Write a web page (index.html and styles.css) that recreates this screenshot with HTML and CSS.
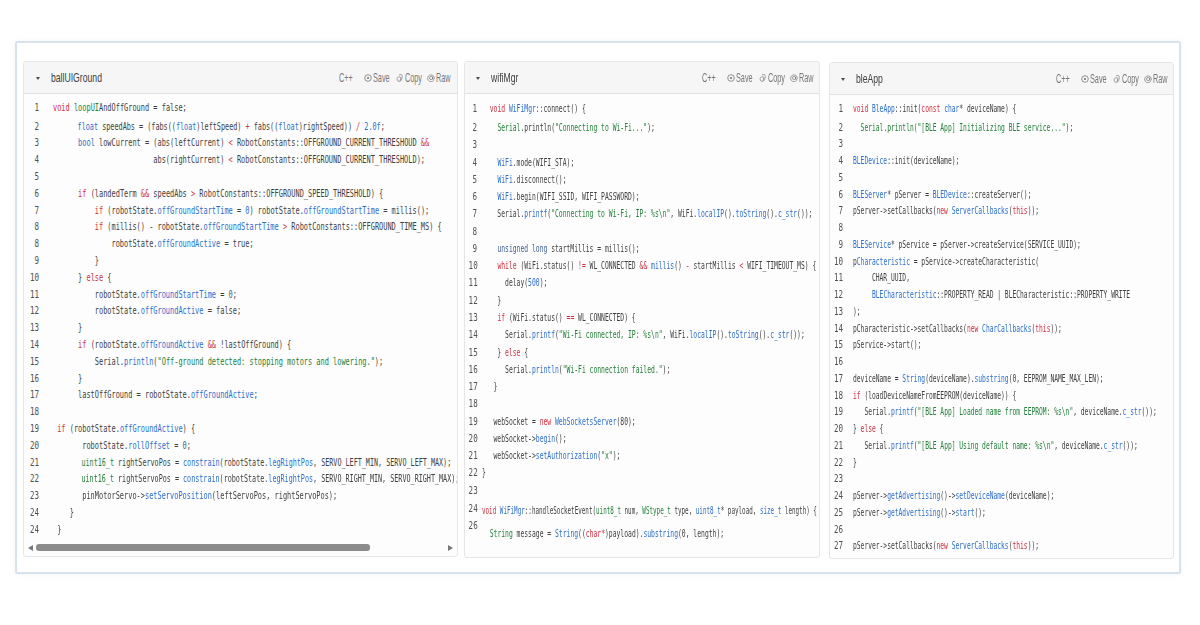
FILE: index.html
```html
<!DOCTYPE html>
<html lang="en">
<head>
<meta charset="utf-8">
<title>Code panels</title>
<link rel="stylesheet" href="styles.css">
</head>
<body>
<svg class="defs" width="0" height="0" aria-hidden="true">
  <symbol id="i-save" viewBox="0 0 8 8"><circle cx="4" cy="4" r="3.3" fill="none" stroke="currentColor" stroke-width=".8"/><circle cx="4" cy="4" r="1.1" fill="currentColor"/></symbol>
  <symbol id="i-copy" viewBox="0 0 8 8"><path d="M3 1.2c.3-.6 1.2-.8 2-.6s1.5.8 1.3 1.8L5.6 5.6c-.2.9-.8 1.3-1.5 1.2M2.3 3C1.5 3.3 1 4 1.1 5l.3 1.2c.2.8.8 1.3 1.6 1.2s1.3-.6 1.4-1.4l.3-2.3C4.800 2.800 3.200 2.600 2.300 3z" fill="none" stroke="currentColor" stroke-width=".7"/></symbol>
  <symbol id="i-raw" viewBox="0 0 8 8"><path d="M6.700 6.400A3.400 3.400 0 1 1 7.400 4c0 1-.4 1.600-1 1.600-.5 0-.8-.4-.7-1l.1-2.100M5.700 4A1.600 1.600 0 1 1 2.500 4a1.600 1.600 0 0 1 3.200 0z" fill="none" stroke="currentColor" stroke-width=".7"/></symbol>
</svg>
<main class="frame">
  <section class="panel p1">
    <header class="head">
      <span class="caret"></span>
      <span class="title"><span>ballUIGround</span></span>
      <div class="acts">
        <span class="act a-lang"><span>C++</span></span>
        <span class="act a-save"><svg class="ico"><use href="#i-save"/></svg><span>Save</span></span>
        <span class="act a-copy"><svg class="ico"><use href="#i-copy"/></svg><span>Copy</span></span>
        <span class="act a-raw"><svg class="ico"><use href="#i-raw"/></svg><span>Raw</span></span>
      </div>
    </header>
    <div class="body">
<div class="row first"><span class="num">1</span><code class="code"><span class="k">void</span> <span class="g">loopUI</span>AndOffGround = false;</code></div>
<div class="row nar"><span class="num">2</span><code class="code">      <span class="b">float</span> speedAbs = (fabs((<span class="b">float</span>)leftSpeed) <span class="k">+</span> fabs((<span class="b">float</span>)rightSpeed)) <span class="k">/</span> <span class="b">2.0f</span>;</code></div>
<div class="row"><span class="num">3</span><code class="code">      <span class="b">bool</span> lowCurrent = (abs(leftCurrent) <span class="k">&lt;</span> RobotConstants::OFFGROUND_CURRENT_THRESHOUD <span class="k">&amp;&amp;</span></code></div>
<div class="row"><span class="num">4</span><code class="code">                        abs(rightCurrent) <span class="k">&lt;</span> RobotConstants::OFFGROUND_CURRENT_THRESHOLD);</code></div>
<div class="row"><span class="num">5</span><code class="code"></code></div>
<div class="row"><span class="num">6</span><code class="code">      <span class="k">if</span> (landedTerm <span class="k">&amp;&amp;</span> speedAbs <span class="k">&gt;</span> RobotConstants::OFFGROUND_SPEED_THRESHOLD) {</code></div>
<div class="row"><span class="num">7</span><code class="code">          <span class="k">if</span> (robotState.<span class="b">offGroundStartTime</span> = <span class="b">0</span>) robotState.<span class="b">offGroundStartTime</span> = millis();</code></div>
<div class="row"><span class="num">8</span><code class="code">          <span class="k">if</span> (millis() - robotState.<span class="b">offGroundStartTime</span> <span class="k">&gt;</span> RobotConstants::OFFGROUND_TIME_MS) {</code></div>
<div class="row"><span class="num">8</span><code class="code">              robotState.<span class="b">offGroundActive</span> = true;</code></div>
<div class="row"><span class="num">9</span><code class="code">          }</code></div>
<div class="row"><span class="num">10</span><code class="code">      } <span class="k">else</span> {</code></div>
<div class="row"><span class="num">11</span><code class="code">          robotState.<span class="b">offGroundStartTime</span> = <span class="n">0</span>;</code></div>
<div class="row"><span class="num">12</span><code class="code">          robotState.<span class="b">offGroundActive</span> = false;</code></div>
<div class="row"><span class="num">13</span><code class="code">      }</code></div>
<div class="row"><span class="num">14</span><code class="code">      <span class="k">if</span> (robotState.<span class="b">offGroundActive</span> <span class="k">&amp;&amp;</span> !lastOffGround) {</code></div>
<div class="row"><span class="num">15</span><code class="code">          Serial.<span class="b">println</span>(<span class="g">"Off-ground detected: stopping motors and lowering."</span>);</code></div>
<div class="row"><span class="num">16</span><code class="code">      }</code></div>
<div class="row"><span class="num">17</span><code class="code">      lastOffGround = robotState.<span class="b">offGroundActive</span>;</code></div>
<div class="row"><span class="num">18</span><code class="code"></code></div>
<div class="row"><span class="num">19</span><code class="code"> <span class="k">if</span> (robotState.<span class="b">offGroundActive</span>) {</code></div>
<div class="row"><span class="num">20</span><code class="code">       robotState.<span class="b">rollOffset</span> = <span class="n">0</span>;</code></div>
<div class="row sq"><span class="num">21</span><code class="code">       <span class="g">uint16_t</span> rightServoPos = <span class="b">constrain</span>(robotState.<span class="b">legRightPos</span>, SERVO_LEFT_MIN, SERVO_LEFT_MAX);</code></div>
<div class="row sq"><span class="num">22</span><code class="code">       <span class="g">uint16_t</span> rightServoPos = <span class="b">constrain</span>(robotState.<span class="b">legRightPos</span>, SERVO_RIGHT_MIN, SERVO_RIGHT_MAX);</code></div>
<div class="row"><span class="num">23</span><code class="code">       pinMotorServo-&gt;<span class="b">setServoPosition</span>(leftServoPos, rightServoPos);</code></div>
<div class="row"><span class="num">24</span><code class="code">    }</code></div>
<div class="row"><span class="num">24</span><code class="code"> }</code></div>
    </div>
    <div class="scroll"><span class="arrow left"></span><span class="thumb"></span><span class="arrow right"></span></div>
  </section>

  <section class="panel p2">
    <header class="head">
      <span class="caret"></span>
      <span class="title"><span>wifiMgr</span></span>
      <div class="acts">
        <span class="act a-lang"><span>C++</span></span>
        <span class="act a-save"><svg class="ico"><use href="#i-save"/></svg><span>Save</span></span>
        <span class="act a-copy"><svg class="ico"><use href="#i-copy"/></svg><span>Copy</span></span>
        <span class="act a-raw"><svg class="ico"><use href="#i-raw"/></svg><span>Raw</span></span>
      </div>
    </header>
    <div class="body">
<div class="row first"><span class="num">1</span><code class="code">  <span class="k">void</span> <span class="b">WiFiMgr</span>::connect() {</code></div>
<div class="row"><span class="num">2</span><code class="code">    <span class="g">Serial</span>.println(<span class="g">"Connecting to Wi-Fi..."</span>);</code></div>
<div class="row"><span class="num">3</span><code class="code"></code></div>
<div class="row"><span class="num">4</span><code class="code">    <span class="b">WiFi</span>.mode(WIFI_STA);</code></div>
<div class="row"><span class="num">5</span><code class="code">    <span class="b">WiFi</span>.disconnect();</code></div>
<div class="row"><span class="num">6</span><code class="code">    <span class="b">WiFi</span>.begin(WIFI_SSID, WIFI_PASSWORD);</code></div>
<div class="row"><span class="num">7</span><code class="code">    Serial.<span class="b">printf</span>(<span class="g">"Connecting to Wi-Fi, IP: %s\n"</span>, WiFi.<span class="b">localIP</span>().<span class="b">toString</span>().<span class="b">c_str</span>());</code></div>
<div class="row"><span class="num">8</span><code class="code"></code></div>
<div class="row"><span class="num">9</span><code class="code">    <span class="n">unsigned long</span> startMillis = millis();</code></div>
<div class="row"><span class="num">10</span><code class="code">    <span class="k">while</span> (WiFi.status() <span class="k">!=</span> WL_CONNECTED <span class="k">&amp;&amp;</span> <span class="b">millis</span>() <span class="k">-</span> startMillis <span class="k">&lt;</span> WIFI_TIMEOUT_MS) {</code></div>
<div class="row"><span class="num">11</span><code class="code">      delay(<span class="b">500</span>);</code></div>
<div class="row"><span class="num">12</span><code class="code">    }</code></div>
<div class="row"><span class="num">13</span><code class="code">    <span class="k">if</span> (WiFi.status() <span class="k">==</span> WL_CONNECTED) {</code></div>
<div class="row"><span class="num">14</span><code class="code">      Serial.<span class="b">printf</span>(<span class="g">"Wi-Fi connected, IP: %s\n"</span>, WiFi.<span class="b">localIP</span>().<span class="b">toString</span>().<span class="b">c_str</span>());</code></div>
<div class="row"><span class="num">15</span><code class="code">    } <span class="k">else</span> {</code></div>
<div class="row"><span class="num">16</span><code class="code">      Serial.<span class="b">println</span>(<span class="g">"Wi-Fi connection failed."</span>);</code></div>
<div class="row"><span class="num">17</span><code class="code">   }</code></div>
<div class="row"><span class="num">18</span><code class="code"></code></div>
<div class="row"><span class="num">19</span><code class="code">   webSocket = <span class="k">new</span> <span class="b">WebSocketsServer</span>(80);</code></div>
<div class="row"><span class="num">20</span><code class="code">   webSocket-&gt;<span class="b">begin</span>();</code></div>
<div class="row"><span class="num">21</span><code class="code">   webSocket-&gt;<span class="b">setAuthorization</span>(<span class="g">"x"</span>);</code></div>
<div class="row"><span class="num">22</span><code class="code">}</code></div>
<div class="row"><span class="num">23</span><code class="code"></code></div>
<div class="row tight"><span class="num">24</span><code class="code"><span class="k">void</span> <span class="b">WiFiMgr</span>::handleSocketEvent(<span class="g">uint8_t</span> num, <span class="g">WStype_t</span> type, <span class="b">uint8_t</span>* payload, <span class="b">size_t</span> length) {</code></div>
<div class="row drop"><span class="num">26</span><code class="code">  <span class="g">String</span> message = <span class="b">String</span>((<span class="k">char*</span>)payload).<span class="b">substring</span>(0, length);</code></div>
    </div>
  </section>

  <section class="panel p3">
    <header class="head">
      <span class="caret"></span>
      <span class="title"><span>bleApp</span></span>
      <div class="acts">
        <span class="act a-lang"><span>C++</span></span>
        <span class="act a-save"><svg class="ico"><use href="#i-save"/></svg><span>Save</span></span>
        <span class="act a-copy"><svg class="ico"><use href="#i-copy"/></svg><span>Copy</span></span>
        <span class="act a-raw"><svg class="ico"><use href="#i-raw"/></svg><span>Raw</span></span>
      </div>
    </header>
    <div class="body">
<div class="row first"><span class="num">1</span><code class="code"><span class="k">void</span> <span class="b">BleApp</span>::init(<span class="k">const</span> <span class="b">char</span>* deviceName) {</code></div>
<div class="row"><span class="num">2</span><code class="code">  <span class="g">Serial.println("[BLE App] Initializing BLE service..."</span>);</code></div>
<div class="row"><span class="num">3</span><code class="code"></code></div>
<div class="row"><span class="num">4</span><code class="code"><span class="b">BLEDevice</span>::init(deviceName);</code></div>
<div class="row"><span class="num">5</span><code class="code"></code></div>
<div class="row"><span class="num">6</span><code class="code"><span class="b">BLEServer</span>* pServer = <span class="b">BLEDevice</span>::createServer();</code></div>
<div class="row"><span class="num">7</span><code class="code">pServer-&gt;setCallbacks(<span class="k">new</span> <span class="b">ServerCallbacks</span>(<span class="k">this</span>));</code></div>
<div class="row"><span class="num">8</span><code class="code"></code></div>
<div class="row"><span class="num">9</span><code class="code"><span class="b">BLEService</span>* pService = pServer-&gt;createService(SERVICE_UUID);</code></div>
<div class="row"><span class="num">10</span><code class="code">p<span class="b">Characteristic</span> = pService-&gt;createCharacteristic(</code></div>
<div class="row"><span class="num">11</span><code class="code">     CHAR_UUID,</code></div>
<div class="row"><span class="num">12</span><code class="code">     <span class="b">BLECharacteristic</span>::PROPERTY_READ | BLECharacteristic::PROPERTY_WRITE</code></div>
<div class="row"><span class="num">13</span><code class="code">);</code></div>
<div class="row"><span class="num">14</span><code class="code">pCharacteristic-&gt;setCallbacks(<span class="k">new</span> <span class="b">CharCallbacks</span>(<span class="k">this</span>));</code></div>
<div class="row"><span class="num">15</span><code class="code">pService-&gt;start();</code></div>
<div class="row"><span class="num">16</span><code class="code"></code></div>
<div class="row"><span class="num">17</span><code class="code">deviceName = <span class="b">String</span>(deviceName).<span class="b">substring</span>(0, EEPROM_NAME_MAX_LEN);</code></div>
<div class="row"><span class="num">18</span><code class="code"><span class="k">if</span> (loadDeviceNameFromEEPROM(deviceName)) {</code></div>
<div class="row"><span class="num">19</span><code class="code">   Serial.<span class="b">printf</span>(<span class="g">"[BLE App] Loaded name from EEPROM: %s\n"</span>, deviceName.<span class="b">c_str</span>());</code></div>
<div class="row"><span class="num">20</span><code class="code">} <span class="k">else</span> {</code></div>
<div class="row"><span class="num">21</span><code class="code">   Serial.<span class="b">printf</span>(<span class="g">"[BLE App] Using default name: %s\n"</span>, deviceName.<span class="b">c_str</span>());</code></div>
<div class="row"><span class="num">22</span><code class="code">}</code></div>
<div class="row"><span class="num">23</span><code class="code"></code></div>
<div class="row"><span class="num">24</span><code class="code">pServer-&gt;<span class="b">getAdvertising</span>()-&gt;<span class="b">setDeviceName</span>(deviceName);</code></div>
<div class="row"><span class="num">25</span><code class="code">pServer-&gt;<span class="b">getAdvertising</span>()-&gt;<span class="b">start</span>();</code></div>
<div class="row"><span class="num">26</span><code class="code"></code></div>
<div class="row"><span class="num">27</span><code class="code">pServer-&gt;setCallbacks(<span class="k">new</span> <span class="b">ServerCallbacks</span>(<span class="k">this</span>));</code></div>
    </div>
  </section>
</main>
</body>
</html>
```

FILE: styles.css
```css
* { box-sizing: border-box; }

html, body { margin: 0; height: 100%; background: #fff; overflow: hidden; }

body { padding: 41px 0 0 15px; font-family: "Liberation Sans", Arial, sans-serif; }

.defs { display: block; height: 0; width: 0; }

.frame {
  width: 1166px;
  height: 533px;
  display: flex;
  align-items: flex-start;
  padding: 18px 0 0 6px;
  border: 2px solid #d8e2ec;
  border-radius: 2px;
  box-shadow: 0 0 5px rgba(205, 218, 230, .35);
  filter: blur(.5px);
}

.panel {
  display: flex;
  flex-direction: column;
  flex: none;
  height: 497px;
  background: #fdfdfd;
  border: 1px solid #e6e6e6;
  border-radius: 3px;
  overflow: hidden;
}

.p1 { width: 435px; --rh: 16.8px; --sx: .643; --numw: 15px; --gap: 14px; --headl: 11px; --headr: 9px; margin-right: 6px; height: 496px; }
.p2 { width: 356px; --rh: 17.28px; --sx: .591; --numw: 12px; --gap: 5px; --headl: 10px; --headr: 8px; margin-right: 9px; }
.p3 { width: 345px; --rh: 16.76px; --sx: .584; --numw: 13px; --gap: 10px; --headl: 10px; --headr: 8px; margin-top: 1px; }

.nar { --sx: .63; }
.sq { --sx: .625; }
.tight { --sx: .548; }

.head {
  display: flex;
  align-items: center;
  flex: none;
  height: 32px;
  padding: 0 var(--headr) 0 var(--headl);
  background: #f6f6f6;
  border-bottom: 1px solid #e2e2e2;
}

.caret {
  width: 0;
  height: 0;
  flex: none;
  margin: 1px 11px 0 1px;
  border-left: 2.500px solid transparent;
  border-right: 2.500px solid transparent;
  border-top: 3.500px solid #4c4c4c;
}

.title { font-size: 13px; color: #404040; flex: none; width: 60px; white-space: nowrap; }
.title span { display: inline-block; transform: scaleX(.665); transform-origin: left center; }

.acts { display: flex; align-items: center; margin-left: auto; color: #777; font-size: 13px; }

.act { display: flex; align-items: center; flex: none; white-space: nowrap; }
.act span { display: inline-block; transform: scaleX(.56); transform-origin: left center; }

.ico { width: 8px; height: 8px; flex: none; margin-right: 1px; }

.a-lang { width: 25px; }
.a-save { width: 32px; }
.a-copy { width: 31px; }
.a-raw { width: 21px; }

.body { flex: 1; min-height: 0; overflow: hidden; padding-top: 5.600px; }

.row { display: flex; height: var(--rh); line-height: var(--rh); align-items: flex-start; white-space: pre; }
.first { margin-bottom: 2.200px; }
.tight { margin-top: 1px; }
.tight .code { margin-top: 2px; }
.drop .code { margin-top: 8px; }

.num {
  display: block;
  flex: none;
  width: var(--numw);
  margin-right: var(--gap);
  text-align: right;
  font: 10.800px/var(--rh) "DejaVu Sans Mono", "Liberation Mono", monospace;
  color: #505050;
  transform: scaleX(.7);
  transform-origin: right center;
}

.code {
  display: block;
  flex: none;
  font: 10.800px/var(--rh) "DejaVu Sans Mono", "Liberation Mono", monospace;
  color: #3e3e3e;
  transform: scaleX(var(--sx));
  transform-origin: left center;
}

.k { color: #d0303f; }
.b { color: #2c6ecb; }
.g { color: #24803a; }
.n { color: #41628f; }

.scroll {
  display: flex;
  align-items: center;
  flex: none;
  height: 14px;
  padding: 0 4px 3px 4px;
}

.thumb { flex: none; width: 334px; height: 7px; margin-left: 3px; border-radius: 3px; background: #8b8b8b; }

.arrow { flex: none; width: 0; height: 0; border-top: 3.500px solid transparent; border-bottom: 3.500px solid transparent; }
.arrow.left { border-right: 5px solid #777; }
.arrow.right { margin-left: auto; border-left: 5px solid #777; }
```
